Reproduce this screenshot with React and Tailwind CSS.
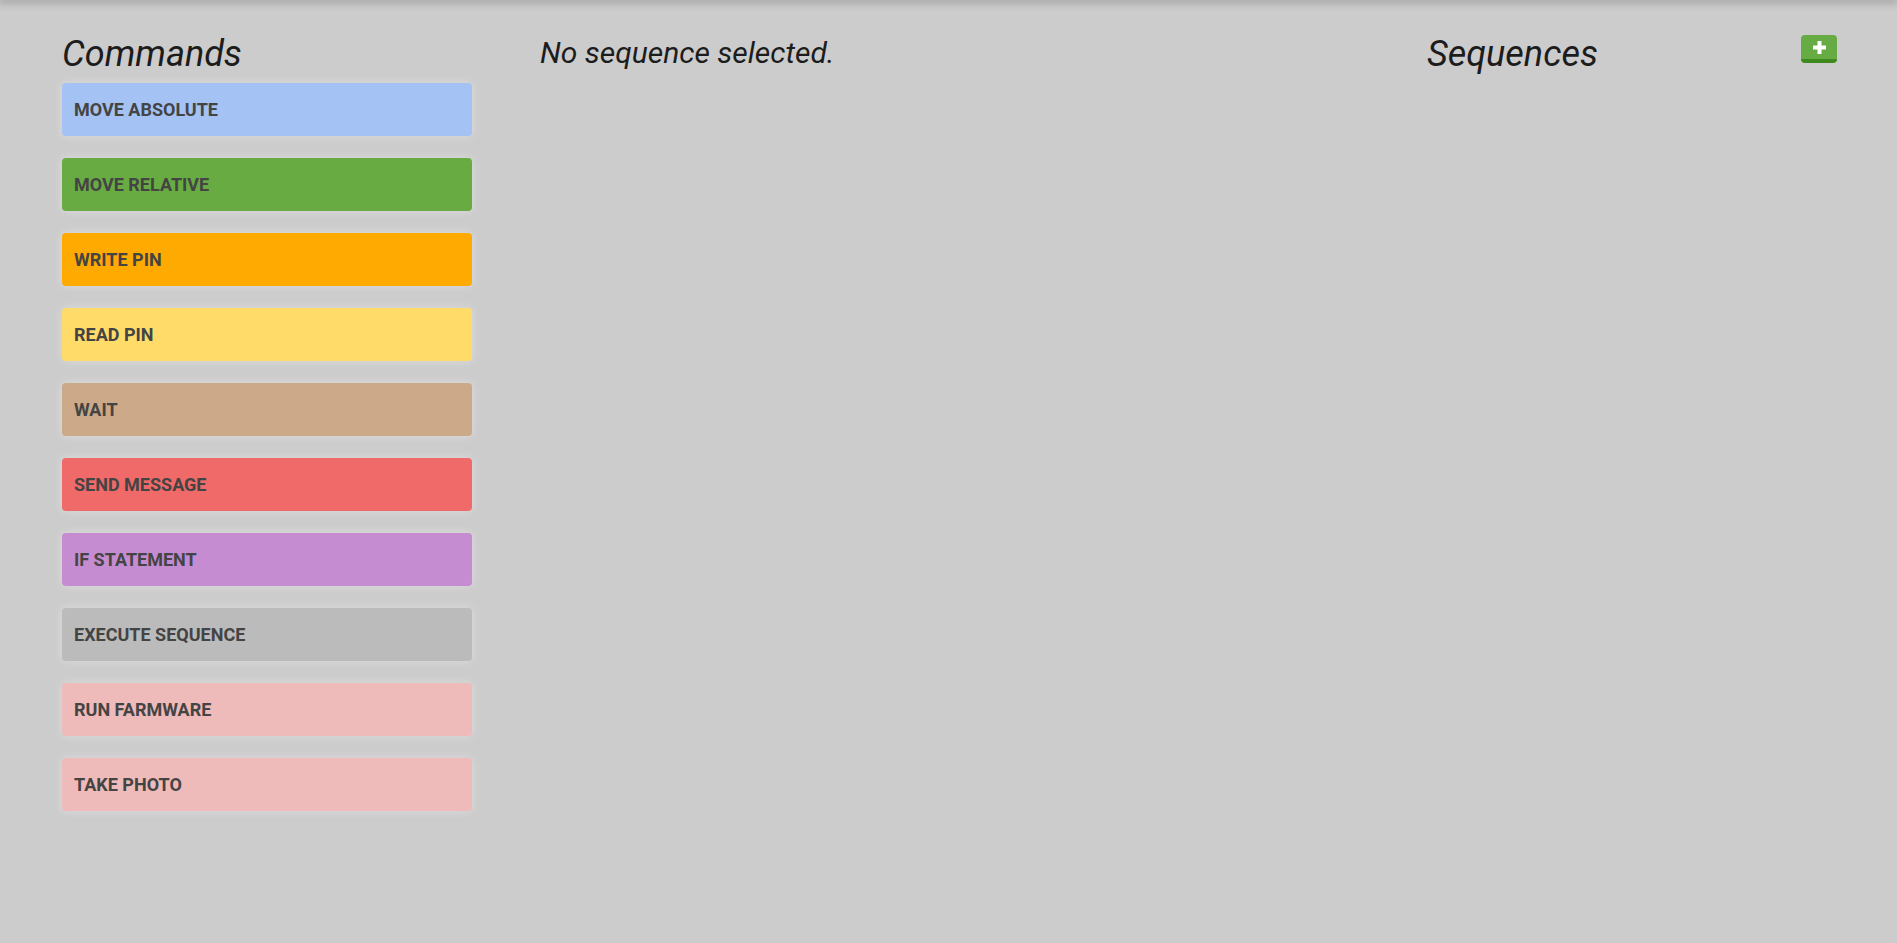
import React from 'react';

const commands = [
  { label: 'MOVE ABSOLUTE', color: 'bg-[#a4c2f4]' },
  { label: 'MOVE RELATIVE', color: 'bg-[#68ab42]' },
  { label: 'WRITE PIN', color: 'bg-[#ffaa00]' },
  { label: 'READ PIN', color: 'bg-[#ffdc69]' },
  { label: 'WAIT', color: 'bg-[#cca988]' },
  { label: 'SEND MESSAGE', color: 'bg-[#f06a6a]' },
  { label: 'IF STATEMENT', color: 'bg-[#c58cd1]' },
  { label: 'EXECUTE SEQUENCE', color: 'bg-[#bbbbbb]' },
  { label: 'RUN FARMWARE', color: 'bg-[#efbaba]' },
  { label: 'TAKE PHOTO', color: 'bg-[#efbaba]' },
];

const CommandButton = ({ label, color }) => (
  <div
    className={`h-[53px] rounded-[4px] ${color} flex items-center pl-[12px] shadow-[0_0_10px_rgba(255,255,255,0.35)] cursor-pointer`}
  >
    <span className="text-[18px] font-bold text-[#444444] leading-none">{label}</span>
  </div>
);

export default function App() {
  return (
    <div
      className="relative min-h-[943px] bg-[#cccccc] overflow-hidden"
      style={{ fontFamily: 'Roboto, "Liberation Sans", sans-serif' }}
    >
      {/* top bar shadow */}
      <div className="absolute top-0 left-0 right-0 h-0 shadow-[0_0_8px_2px_rgba(0,0,0,0.35)]" />

      <div className="flex pl-[62px] pr-[60px] pt-[33px]">
        {/* Commands */}
        <div className="w-[410px] shrink-0">
          <h3 className="text-[36px] leading-[42px] italic font-normal text-[#1c1c1c] mb-[8px]">Commands</h3>
          <div className="flex flex-col gap-[22px]">
            {commands.map(c => (
              <CommandButton key={c.label} {...c} />
            ))}
          </div>
        </div>

        {/* Editor */}
        <div className="flex-1 pl-[68px] pt-[2px]">
          <h3 className="text-[30px] leading-[36px] italic font-normal text-[#1c1c1c]">No sequence selected.</h3>
        </div>

        {/* Sequences */}
        <div className="w-[410px] shrink-0 flex items-start justify-between">
          <h3 className="text-[36px] leading-[42px] italic font-normal text-[#1c1c1c]">Sequences</h3>
          <button className="mt-[2px] w-[36px] h-[28px] rounded-[4px] bg-[#66ab44] border-b-[4px] border-[#3e8a1e] flex items-center justify-center">
            <svg width="13" height="13" viewBox="0 0 13 13">
              <rect x="4.5" y="0" width="4" height="13" fill="#ffffff" />
              <rect x="0" y="4.5" width="13" height="4" fill="#ffffff" />
            </svg>
          </button>
        </div>
      </div>
    </div>
  );
}
